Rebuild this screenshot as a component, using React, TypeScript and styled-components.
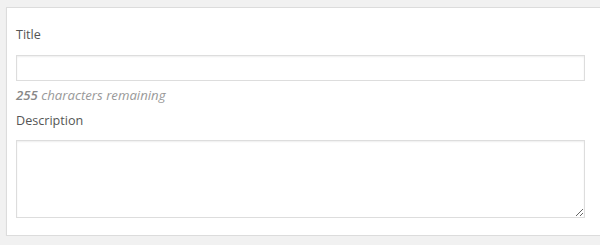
import React from "react";
import styled, { createGlobalStyle } from "styled-components";

const Global = createGlobalStyle`
  html, body { margin: 0; padding: 0; background: #f1f1f1; }
  body { font-family: "Open Sans", "Liberation Sans", sans-serif; font-size: 13px; color: #444; }
  * { box-sizing: border-box; }
`;

const Page = styled.div`
  padding: 7px 0 0 6px;
  width: 610px;
`;

const Panel = styled.div`
  background: #fff;
  border: 1px solid #dcdcdc;
  box-shadow: 0 1px 1px rgba(0, 0, 0, 0.06);
  padding: 16px 25px 17px 9px;
  display: flex;
  flex-direction: column;
  width: 604px;
`;

const Label = styled.label`
  display: block;
  font-size: 12.6px;
  line-height: 21px;
  color: #555;
  margin: 0;
`;

const Field = styled.div<{ $gap?: number; $top?: number }>`
  display: flex;
  flex-direction: column;
  gap: ${(p) => p.$gap ?? 10}px;
  margin-top: ${(p) => p.$top ?? 0}px;
`;

const Input = styled.input`
  width: 569px;
  height: 26px;
  border: 1px solid #ddd;
  box-shadow: inset 0 1px 2px rgba(0, 0, 0, 0.07);
  background: #fff;
  font: inherit;
  margin: 0;
  padding: 0 6px;
  outline: none;
`;

const TextArea = styled.textarea`
  width: 569px;
  height: 78px;
  border: 1px solid #ddd;
  box-shadow: inset 0 1px 2px rgba(0, 0, 0, 0.07);
  background: #fff;
  font: inherit;
  margin: 0;
  padding: 4px 6px;
  outline: none;
  display: block;
`;

const Hint = styled.div`
  font-style: italic;
  color: #999;
  font-size: 13.2px;
  line-height: 20px;
  margin-top: 4px;
  strong { font-weight: 600; color: #888; }
`;

export default function App() {
  return (
    <>
      <Global />
      <Page>
        <Panel>
          <Field $gap={10}>
            <Label htmlFor="title">Title</Label>
            <Input id="title" type="text" />
          </Field>
          <Hint>
            <strong>255</strong> characters remaining
          </Hint>
          <Field $gap={9} $top={5}>
            <Label htmlFor="desc">Description</Label>
            <TextArea id="desc" />
          </Field>
        </Panel>
      </Page>
    </>
  );
}
